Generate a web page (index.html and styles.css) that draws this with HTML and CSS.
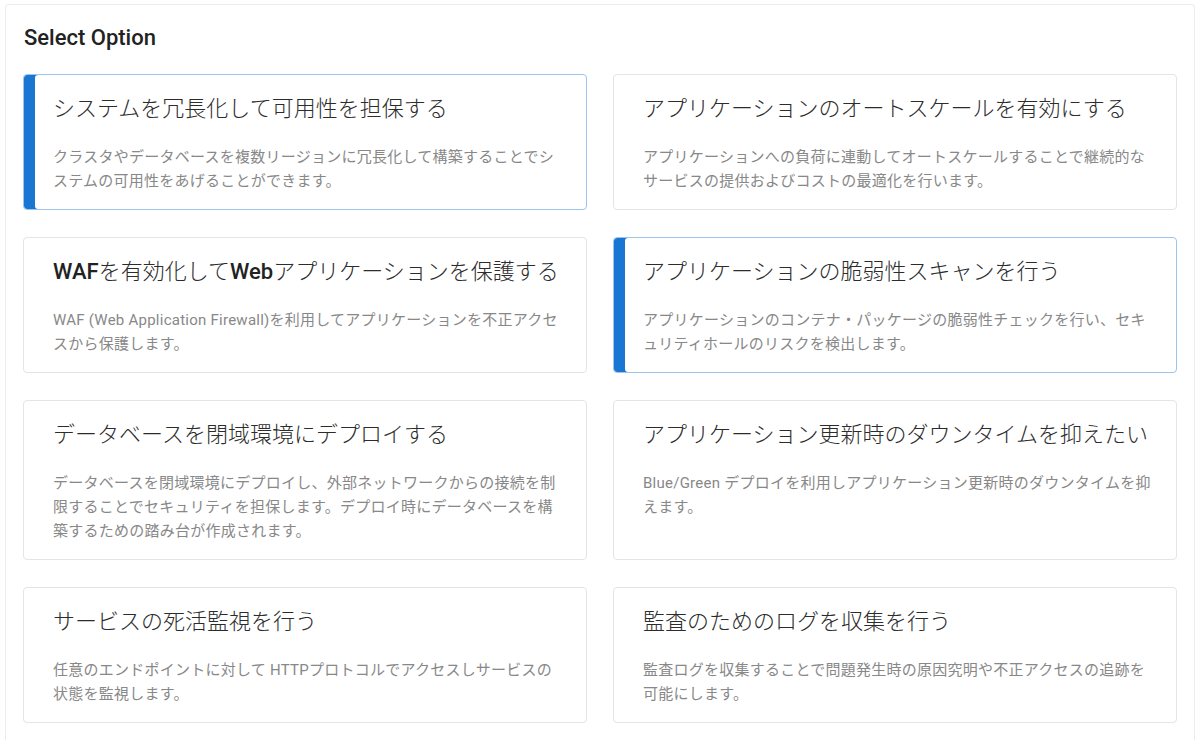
FILE: index.html
```html
<!DOCTYPE html>
<html lang="ja">
<head>
  <meta charset="UTF-8">
  <title>Select Option</title>
  <link rel="stylesheet" href="styles.css">
</head>
<body>
  <div class="panel">
    <h2 class="panel-title">Select Option</h2>
    <div class="options">
      <div class="option selected">
        <div class="option-title">システムを冗長化して可用性を担保する</div>
        <div class="option-desc">クラスタやデータベースを複数リージョンに冗長化して構築することでシ<br>ステムの可用性をあげることができます。</div>
      </div>
      <div class="option">
        <div class="option-title">アプリケーションのオートスケールを有効にする</div>
        <div class="option-desc">アプリケーションへの負荷に連動してオートスケールすることで継続的な<br>サービスの提供およびコストの最適化を行います。</div>
      </div>
      <div class="option">
        <div class="option-title"><span class="en">WAF</span>を有効化して<span class="en">Web</span>アプリケーションを保護する</div>
        <div class="option-desc">WAF (Web Application Firewall)を利用してアプリケーションを不正アクセ<br>スから保護します。</div>
      </div>
      <div class="option selected">
        <div class="option-title">アプリケーションの脆弱性スキャンを行う</div>
        <div class="option-desc">アプリケーションのコンテナ・パッケージの脆弱性チェックを行い、セキ<br>ュリティホールのリスクを検出します。</div>
      </div>
      <div class="option">
        <div class="option-title">データベースを閉域環境にデプロイする</div>
        <div class="option-desc">データベースを閉域環境にデプロイし、外部ネットワークからの接続を制<br>限することでセキュリティを担保します。デプロイ時にデータベースを構<br>築するための踏み台が作成されます。</div>
      </div>
      <div class="option">
        <div class="option-title">アプリケーション更新時のダウンタイムを抑えたい</div>
        <div class="option-desc">Blue/Green デプロイを利用しアプリケーション更新時のダウンタイムを抑<br>えます。</div>
      </div>
      <div class="option">
        <div class="option-title">サービスの死活監視を行う</div>
        <div class="option-desc">任意のエンドポイントに対して HTTPプロトコルでアクセスしサービスの<br>状態を監視します。</div>
      </div>
      <div class="option">
        <div class="option-title">監査のためのログを収集を行う</div>
        <div class="option-desc">監査ログを収集することで問題発生時の原因究明や不正アクセスの追跡を<br>可能にします。</div>
      </div>
    </div>
  </div>
</body>
</html>
```

FILE: styles.css
```css
body { margin: 0; background: #fff; font-family: Roboto, "Noto Sans CJK JP", sans-serif; }
.panel { margin: 4px 5px 0 5px; width: 1154px; padding: 20px 17px 17px 17px; border: 1px solid #ececec; border-bottom: none; border-radius: 4px 4px 0 0; }
.panel-title { margin: 0 0 23px 1px; font-size: 22px; line-height: 26px; font-weight: 500; color: #222; }
.options { display: grid; grid-template-columns: minmax(0, 1fr) minmax(0, 1fr); column-gap: 26px; row-gap: 27px; }
.option { padding: 19px 29px 16px 29px; border: 1px solid #e4e4e4; border-radius: 4px; background: #fff; cursor: pointer; }
.option.selected { border-color: #9cc4ec; box-shadow: inset 11px 0 0 #1976d2; }
.option-title { font-size: 22px; line-height: 30px; font-weight: 300; color: #2c2c2c; margin-bottom: 21px; white-space: nowrap; }
.option-title .en { font-weight: 500; color: #222; }
.option-desc { font-size: 15px; line-height: 24px; letter-spacing: 0.25px; color: #888; white-space: nowrap; }
```
